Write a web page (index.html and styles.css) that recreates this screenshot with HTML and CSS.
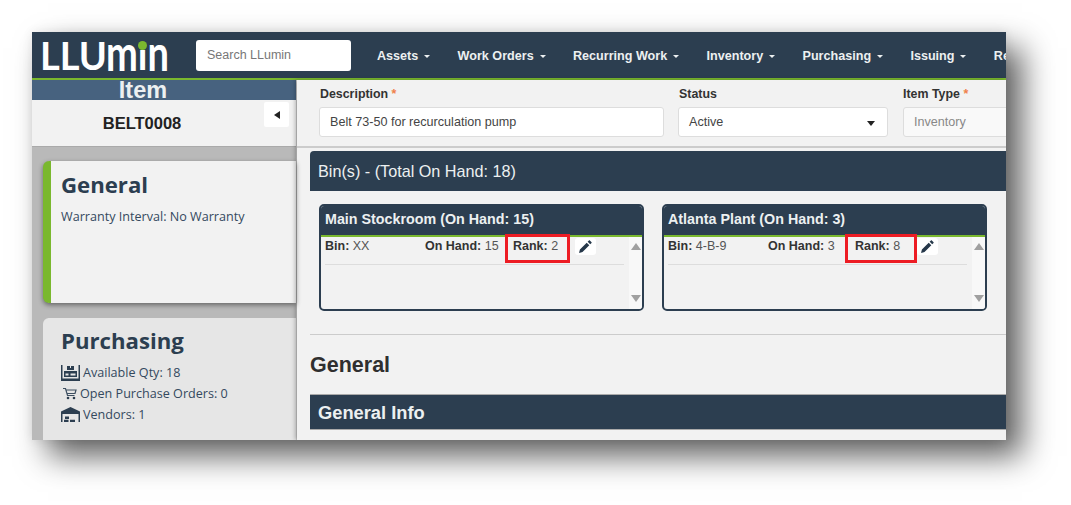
FILE: index.html
```html
<!DOCTYPE html>
<html lang="en">
<head>
<meta charset="utf-8">
<title>LLumin Item</title>
<link rel="stylesheet" href="styles.css">
</head>
<body>
<div class="shot">
  <header class="nav">
    <div class="logo">LLU<span class="logo-tall logo-m">m</span>i<span class="logo-tall">n</span><span class="logo-dot"></span></div>
    <div class="search">Search LLumin</div>
    <nav class="menu">
      <span class="menu-item">Assets<i class="caret"></i></span>
      <span class="menu-item">Work Orders<i class="caret"></i></span>
      <span class="menu-item">Recurring Work<i class="caret"></i></span>
      <span class="menu-item">Inventory<i class="caret"></i></span>
      <span class="menu-item">Purchasing<i class="caret"></i></span>
      <span class="menu-item">Issuing<i class="caret"></i></span>
      <span class="menu-item">Reports</span>
    </nav>
  </header>
  <div class="body">
    <aside class="side">
      <div class="item-title">Item</div>
      <div class="item-code">
        <span>BELT0008</span>
        <span class="collapse"><svg width="6" height="8" viewBox="0 0 6 8"><path d="M0 4l6-4v8z" fill="#222"/></svg></span>
      </div>
      <div class="cards">
        <section class="card card-active">
          <h2>General</h2>
          <p class="warranty">Warranty Interval: No Warranty</p>
        </section>
        <section class="card card-muted">
          <h2>Purchasing</h2>
          <p class="stat"><svg class="ico" width="19" height="16" viewBox="0 0 19 16"><path fill="#2c3e50" fill-rule="evenodd" d="M0 0h1.500v13.500h16V0H19v16H0zM6 1h3v2h1V1h3v4H6zM3 6h13v6H3zM4.500 8.500v2h3v-2zM9.500 8.500v2h5v-2z"/></svg>Available Qty: 18</p>
          <p class="stat stat-cart"><svg class="ico" width="14" height="13" viewBox="0 0 14 13"><path fill="none" stroke="#3d4f61" stroke-width="1.200" d="M0 1.500h2.500l2 7h7M3.200 3h9.800l-1 3.500H4.200"/><circle cx="5" cy="11" r="1.300" fill="#2c3e50"/><circle cx="11" cy="11" r="1.300" fill="#2c3e50"/></svg>Open Purchase Orders: 0</p>
          <p class="stat"><svg class="ico" width="19" height="15" viewBox="0 0 19 15"><path fill="#2c3e50" d="M0 4.500L9.500 0 19 4.500V15h-1.500V7h-16v8H0zM4 9.500h4V12H4zM3 12.800h4.500V15H3zM9 12.800h5V15H9z"/></svg>Vendors: 1</p>
        </section>
      </div>
    </aside>
    <main class="main">
      <div class="form">
        <label class="field field-desc"><span class="lbl lbl-in">Description <b>*</b></span><span class="ctl">Belt 73-50 for recurculation pump</span></label>
        <label class="field field-status"><span class="lbl lbl-in">Status</span><span class="ctl ctl-select">Active<svg width="8" height="5" viewBox="0 0 8 5"><path d="M0 0h8L4 5z" fill="#222"/></svg></span></label>
        <label class="field field-type"><span class="lbl">Item Type <b>*</b></span><span class="ctl ctl-off">Inventory</span></label>
      </div>
      <div class="content">
        <div class="bins-bar">Bin(s) - (Total On Hand: 18)</div>
        <div class="bins">
          <article class="bin">
            <h3>Main Stockroom (On Hand: 15)</h3>
            <div class="bin-body">
              <div class="bin-rows">
                <div class="bin-row">
                  <span class="c1"><b>Bin:</b> XX</span>
                  <span class="c2"><b>On Hand:</b> 15</span>
                  <span class="c3"><b>Rank:</b> 2</span>
                  <span class="edit"><svg width="13" height="13" viewBox="0 0 14 14"><path fill="#26384a" d="M0 14l1-3.800 7.300-7.300 2.800 2.800-7.300 7.300zM9.300 1.900L10.700.5c.3-.3.700-.3 1 0l1.800 1.800c.3.300.3.700 0 1l-1.400 1.400z"/></svg></span>
                </div>
              </div>
              <div class="scroll"><i class="up"></i><i class="down"></i></div>
            </div>
          </article>
          <article class="bin">
            <h3>Atlanta Plant (On Hand: 3)</h3>
            <div class="bin-body">
              <div class="bin-rows">
                <div class="bin-row">
                  <span class="c1"><b>Bin:</b> 4-B-9</span>
                  <span class="c2"><b>On Hand:</b> 3</span>
                  <span class="c3 c3-wide"><b>Rank:</b> 8</span>
                  <span class="edit edit-tight"><svg width="13" height="13" viewBox="0 0 14 14"><path fill="#26384a" d="M0 14l1-3.800 7.300-7.300 2.800 2.800-7.300 7.300zM9.300 1.900L10.700.5c.3-.3.700-.3 1 0l1.800 1.800c.3.300.3.700 0 1l-1.400 1.400z"/></svg></span>
                </div>
              </div>
              <div class="scroll"><i class="up"></i><i class="down"></i></div>
            </div>
          </article>
        </div>
        <hr class="rule">
        <h2 class="section-title">General</h2>
        <div class="info-bar">General Info</div>
      </div>
    </main>
  </div>
</div>
</body>
</html>
```

FILE: styles.css
```css
* { box-sizing: border-box; }
html, body { margin: 0; padding: 0; background: #fff; }
body { width: 1071px; height: 505px; overflow: hidden; font-family: "Liberation Sans", Arial, sans-serif; color: #333; }
b { font-weight: 700; }
p, h2, h3 { margin: 0; }

.shot {
  margin: 32px 0 0 32px;
  width: 974px;
  height: 408px;
  overflow: hidden;
  background: #f2f2f2;
  display: flex;
  flex-direction: column;
  box-shadow: 16px 16px 30px rgba(0, 0, 0, .63), 0 0 10px rgba(0, 0, 0, .08);
}

.nav {
  flex: none;
  height: 48px;
  background: #2c3e50;
  border-bottom: 2px solid #7ab82e;
  display: flex;
  align-items: center;
  white-space: nowrap;
}
.logo {
  position: relative;
  flex: none;
  width: 164px;
  padding-left: 8px;
  font: 700 38px/46px "Lato", sans-serif;
  letter-spacing: 0;
  color: #fff;
}
.logo-tall {
  display: inline-block;
  transform: scaleY(1.3);
  transform-origin: 0 35px;
}
.logo-m { margin-left: -1px; }
.logo-dot {
  position: absolute;
  left: 106px;
  top: 9px;
  width: 9px;
  height: 9px;
  border-radius: 50%;
  background: #7ab82e;
}
.search {
  flex: none;
  width: 155px;
  height: 31px;
  padding-left: 11px;
  background: #fff;
  border-radius: 3px;
  font-size: 12.500px;
  line-height: 31px;
  color: #777;
}
.menu { display: flex; flex: none; margin-left: 26px; padding-top: 2px; }
.menu-item {
  font-size: 12.600px;
  font-weight: 700;
  color: #ecf0f1;
  margin-right: 27.300px;
  display: flex;
  align-items: center;
}
.caret {
  margin-left: 6px;
  border-top: 3.500px solid #ecf0f1;
  border-left: 3.500px solid transparent;
  border-right: 3.500px solid transparent;
}

.body { flex: 1; min-height: 0; display: flex; }

.side {
  flex: none;
  width: 265px;
  background: #b9b9b9;
  border-right: 1px solid #ccc;
  display: flex;
  flex-direction: column;
}
.item-title {
  height: 20px;
  padding-right: 42px;
  background: #47627f;
  color: #ecf0f1;
  text-align: center;
  font-size: 23.500px;
  font-weight: 700;
  line-height: 20px;
}
.item-code {
  position: relative;
  height: 47px;
  background: #f2f2f2;
  border-bottom: 1px solid #aaa;
  text-align: center;
  font-size: 16.500px;
  font-weight: 700;
  line-height: 47px;
  color: #222;
  padding-right: 44px;
}
.collapse {
  position: absolute;
  top: 2px;
  right: 7px;
  width: 25px;
  height: 25px;
  background: #fff;
  border-radius: 2px;
  display: flex;
  align-items: center;
  justify-content: center;
}
.cards { padding: 14px 0 0 11px; display: flex; flex-direction: column; gap: 15px; }
.card {
  padding: 8px 0 0 10px;
  font-family: "Open Sans", sans-serif;
  color: #2c3e50;
  border-radius: 6px 0 0 6px;
}
.card h2 { font-size: 22.200px; font-weight: 700; line-height: 29px; }
.card-active {
  height: 142px;
  padding-top: 9px;
  background: #f2f2f2;
  border-left: 8px solid #7ab82e;
  box-shadow: 0 2px 5px rgba(0, 0, 0, .45);
}
.card-muted {
  height: 140px;
  background: #e6e6e6;
  border-left: 8px solid #e6e6e6;
}
.warranty { margin-top: 9px; font-size: 12.600px; line-height: 18px; color: #34495e; }
.stat { font-size: 12.600px; line-height: 21px; color: #34495e; display: flex; align-items: center; }
.card-muted .stat:first-of-type { margin-top: 7px; }
.ico { margin-right: 3px; flex: none; }
.stat-cart { padding-left: 2px; }

.main { flex: 1; min-width: 0; display: flex; flex-direction: column; box-shadow: -2px 0 4px rgba(0, 0, 0, .25); z-index: 1; }
.form {
  flex: none;
  height: 68px;
  padding: 7px 0 0 22px;
  display: flex;
  border-bottom: 2px solid #ccc;
  white-space: nowrap;
  overflow: hidden;
}
.field { display: block; flex: none; }
.field-desc { width: 345px; margin-right: 14px; }
.field-status { width: 210px; margin-right: 15px; }
.field-type { width: 120px; margin-right: -20px; }
.lbl { display: block; font-size: 12.400px; font-weight: 700; line-height: 15px; color: #333; margin-bottom: 5px; }
.lbl-in { padding-left: 1px; }
.lbl b { color: #f0814a; }
.ctl {
  display: flex;
  justify-content: space-between;
  align-items: center;
  height: 30px;
  padding: 0 12px 0 10px;
  background: #fff;
  border: 1px solid #ddd;
  border-radius: 3px;
  font-size: 12.600px;
  color: #444;
}
.ctl-select svg { margin-top: 2px; }
.ctl-off { background: #f9f9f9; color: #888; }

.content { flex: 1; min-height: 0; padding: 3px 0 0 13px; overflow: hidden; }
.bins-bar {
  height: 40px;
  background: #2c3e50;
  color: #ecf0f1;
  border-radius: 4px 0 0 0;
  padding-left: 8px;
  font-size: 16.200px;
  line-height: 40px;
}
.bins { display: flex; gap: 18px; padding: 13px 0 0 10px; margin-left: -1px; }
.bin {
  width: 325px;
  height: 107px;
  border: 2px solid #2c3e50;
  border-radius: 5px;
  overflow: hidden;
}
.bin h3 {
  height: 29px;
  background: #2c3e50;
  color: #ecf0f1;
  padding-left: 4px;
  font-size: 14.300px;
  line-height: 27px;
}
.bin-body { height: 74px; border-top: 2px solid #7ab82e; display: flex; }
.bin-rows { flex: 1; min-width: 0; padding: 0 5px 0 4px; }
.bin-row {
  height: 28px;
  border-bottom: 1px solid #ddd;
  display: flex;
  font-size: 12.500px;
  line-height: 18px;
  color: #555;
}
.bin-row b { color: #333; }
.c1 { width: 100px; }
.c2 { width: 80px; }
.c3 {
  position: relative;
  flex: none;
  width: 65px;
  height: 29px;
  margin-top: -3px;
  padding: 0 0 0 5px;
  border: 3.500px solid #ed1c24;
  line-height: 18px;
}
.c3-wide { width: 72px; margin-left: -3px; padding-left: 7px; }
.edit {
  flex: none;
  width: 21px;
  height: 17px;
  margin: 1px 0 0 5px;
  background: #fff;
  border-radius: 3px;
  display: flex;
  align-items: center;
  justify-content: center;
}
.edit-tight { margin-left: 0; }
.scroll {
  flex: none;
  width: 13px;
  background: #f8f8f8;
  display: flex;
  flex-direction: column;
  justify-content: space-between;
  align-items: center;
  padding: 6px 0 7px;
}
.up { border-bottom: 7px solid #a0a0a0; border-left: 5px solid transparent; border-right: 5px solid transparent; }
.down { border-top: 7px solid #a0a0a0; border-left: 5px solid transparent; border-right: 5px solid transparent; }

.rule { margin: 23px 0 0; border: 0; border-top: 1px solid #ccc; }
.section-title { margin-top: 17px; font-size: 21.500px; font-weight: 700; line-height: 26px; color: #2f2f2f; }
.info-bar {
  margin-top: 16px;
  height: 36px;
  background: #2c3e50;
  border-top: 1px solid #aaa;
  border-bottom: 1px solid #aaa;
  color: #ecf0f1;
  padding-left: 8px;
  font-size: 18.300px;
  font-weight: 700;
  line-height: 36px;
}
```
